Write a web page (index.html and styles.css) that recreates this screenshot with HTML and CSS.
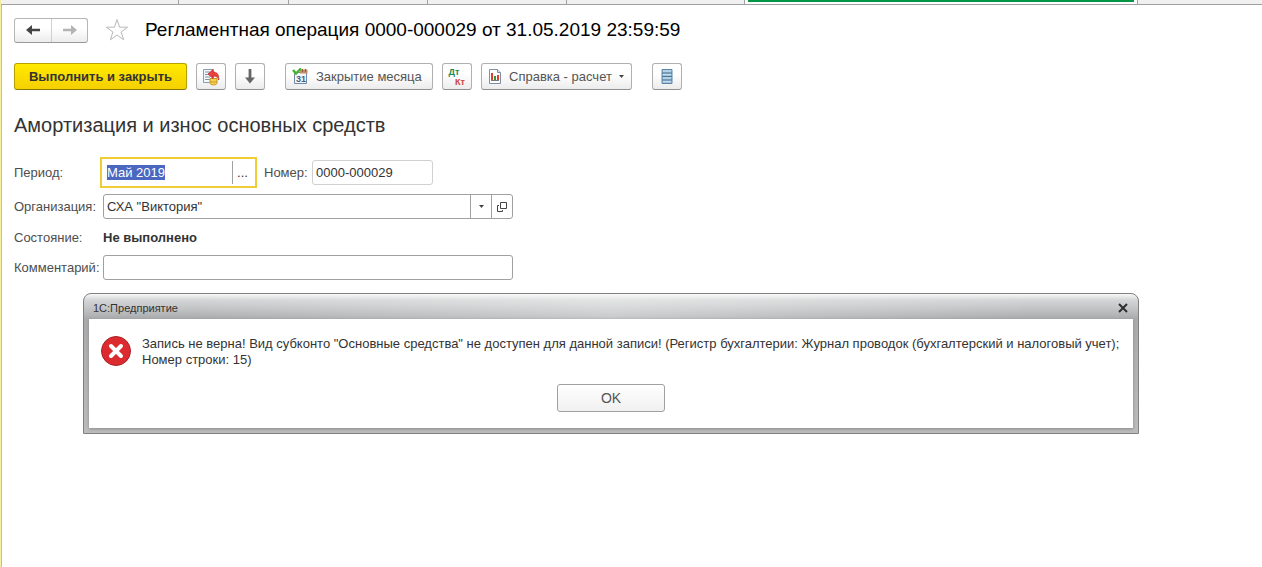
FILE: index.html
```html
<!DOCTYPE html>
<html lang="ru">
<head>
    <meta charset="UTF-8">
    <meta name="viewport" content="width=device-width, initial-scale=1.0">
    <title>Регламентная операция</title>
    <link rel="stylesheet" href="styles.css">
</head>
<body>
    <div class="window">
        <div class="tabs">
            <div class="tab tab-w1"></div>
            <div class="tab tab-w2"></div>
            <div class="tab tab-w3"></div>
            <div class="tab tab-w3"></div>
            <div class="tab tab-w1"></div>
            <div class="tab active"></div>
        </div>

        <main>
            <header class="title-row">
                <div class="nav">
                    <button type="button" aria-label="Назад">
                        <svg width="14" height="12" viewBox="0 0 14 12"><path d="M0 6l6-5v3.7h8v2.6H6V11z" fill="#444"/></svg>
                    </button>
                    <button type="button" aria-label="Вперед">
                        <svg width="14" height="12" viewBox="0 0 14 12"><path d="M14 6L8 1v3.7H0v2.6h8V11z" fill="#b4b4b4"/></svg>
                    </button>
                </div>
                <button type="button" class="star" aria-label="В избранное">
                    <svg width="24" height="24" viewBox="0 0 24 24"><path d="M12 1.5l2.6 7.7h8l-6.5 4.8 2.5 7.8-6.600-4.800-6.600 4.800 2.500-7.800L1.400 9.200h8z" fill="#fff" stroke="#b8b8b8"/></svg>
                </button>
                <h1>Регламентная операция 0000-000029 от 31.05.2019 23:59:59</h1>
            </header>

            <div class="toolbar">
                <button type="button" class="btn primary">Выполнить и закрыть</button>
                <button type="button" class="btn icon" aria-label="Провести">
                    <svg width="18" height="18" viewBox="0 0 18 18">
                        <path d="M1.500 1.500h10v13h-10z" fill="#f5f8fb" stroke="#8a9cb0"/>
                        <path d="M3 4h5M3 6.500h5M3 9h5M3 11.500h6" stroke="#7f93aa"/>
                        <path d="M8 10.500v4.500c0 2.500 7 2.500 7 0v-4.500z" fill="#f5cf4f" stroke="#c99a22"/>
                        <path d="M8 13c1 1.500 6 1.500 7 0" fill="none" stroke="#c99a22"/>
                        <path d="M6 6l5-4.500V4c4 0 6 2 5.800 8-1-3-2.500-4-5.800-4v2.500z" fill="#e8433f" stroke="#c52d30" stroke-width=".7"/>
                    </svg>
                </button>
                <button type="button" class="btn icon" aria-label="Записать">
                    <svg width="10" height="15" viewBox="0 0 10 15"><path d="M3.600 0h2.800v8.500H10L5 14.500 0 8.500h3.600z" fill="#666"/></svg>
                </button>
                <button type="button" class="btn wide month">
                    <svg width="17" height="17" viewBox="0 0 17 17">
                        <path d="M2.500 4.500h12v11h-12z" fill="#f2f6fb" stroke="#7188a6"/>
                        <path d="M8 1.500h7.500v4H8z" fill="#c58f6b"/>
                        <path d="M10.500 1v3M13.500 1v3" stroke="#8d5e42"/>
                        <text x="4" y="14" class="day">31</text>
                        <path d="M1 2l3 3.500L9 .5" fill="none" stroke="#45b32b" stroke-width="2.400"/>
                    </svg>
                    Закрытие месяца
                </button>
                <button type="button" class="btn icon dtkt" aria-label="Проводки">
                    <span class="dt">Дт</span>
                    <span class="kt">Кт</span>
                </button>
                <button type="button" class="btn wide report">
                    <svg width="14" height="15" viewBox="0 0 14 15">
                        <path d="M1.500.500h8l3 3v11h-11z" fill="#fff" stroke="#7e8fa5"/>
                        <path d="M9.500.500v3h3" fill="#dce5ef" stroke="#7e8fa5"/>
                        <path d="M3 4h2v7H3z" fill="#e23b32"/>
                        <path d="M6 7h2v4H6z" fill="#35953f"/>
                        <path d="M9 6h2v5H9z" fill="#e23b32"/>
                        <path d="M3 11.500h8" stroke="#777"/>
                    </svg>
                    Справка - расчет
                    <svg width="5" height="3" viewBox="0 0 5 3"><path d="M0 0h5L2.500 3z" fill="#444"/></svg>
                </button>
                <button type="button" class="btn icon list" aria-label="Реестр">
                    <svg width="12" height="15" viewBox="0 0 12 15">
                        <path d="M1 .5h10v14H1z" fill="#9fc3df" stroke="#5f86a8"/>
                        <path d="M1 4h10M1 7.500h10M1 11h10" stroke="#4f7595"/>
                        <path d="M2 2h8M2 5.500h8M2 9h8M2 12.500h8" stroke="#c5dff0"/>
                    </svg>
                </button>
            </div>

            <h2>Амортизация и износ основных средств</h2>

            <form class="form">
                <div class="row">
                    <label for="period">Период:</label>
                    <div class="period">
                        <input type="text" id="period" value="Май 2019">
                        <button type="button" aria-label="Выбрать период">...</button>
                    </div>
                    <label for="number" class="number-label">Номер:</label>
                    <input type="text" id="number" class="field number" value="0000-000029">
                </div>
                <div class="row">
                    <label for="org">Организация:</label>
                    <div class="field combo">
                        <div class="select">
                            <select id="org">
                                <option>СХА "Виктория"</option>
                            </select>
                            <span class="caret"><svg width="5" height="3" viewBox="0 0 5 3"><path d="M0 0h5L2.500 3z" fill="#444"/></svg></span>
                        </div>
                        <button type="button" aria-label="Открыть">
                            <svg width="10" height="10" viewBox="0 0 10 10"><path d="M3.500.500h6v6h-6zM2 3.500H.5v6h5V8" fill="none" stroke="#444"/></svg>
                        </button>
                    </div>
                </div>
                <div class="row state-row">
                    <span class="label">Состояние:</span>
                    <strong>Не выполнено</strong>
                </div>
                <div class="row">
                    <label for="comment">Комментарий:</label>
                    <input type="text" id="comment" class="field">
                </div>
            </form>

            <section class="dialog" role="alertdialog" aria-labelledby="dialog-title">
                <div class="dialog-head">
                    <span id="dialog-title">1С:Предприятие</span>
                    <button type="button" aria-label="Закрыть">
                        <svg width="10" height="10" viewBox="0 0 10 10"><path d="M1 1l8 8M9 1L1 9" stroke="#2e2e2e" stroke-width="2"/></svg>
                    </button>
                </div>
                <div class="dialog-body">
                    <div class="message">
                        <svg width="30" height="30" viewBox="0 0 30 30">
                            <circle cx="15" cy="15" r="14.500" fill="#dc2b30" stroke="#a82226"/>
                            <path d="M10 10l10 10M20 10L10 20" stroke="#fff" stroke-width="4" stroke-linecap="round"/>
                        </svg>
                        <p>Запись не верна! Вид субконто "Основные средства" не доступен для данной записи! (Регистр бухгалтерии: Журнал проводок (бухгалтерский и налоговый учет); Номер строки: 15)</p>
                    </div>
                    <button type="button" class="ok">OK</button>
                </div>
            </section>
        </main>
    </div>
    <script src="index.js"></script>
</body>
</html>
```
FILE: styles.css
```css
* {
    margin: 0;
    padding: 0;
    box-sizing: border-box;
}

body {
    font-family: "Liberation Sans", Arial, sans-serif;
    font-size: 13px;
    color: #333;
    background: #fff;
}

button,
input,
select {
    font: inherit;
    color: inherit;
    border: none;
    background: none;
    outline: none;
}

svg {
    display: block;
    flex-shrink: 0;
}

.window {
    min-height: 100vh;
    border-left: 1px solid #f7efa0;
    box-shadow: inset 1px 0 #cfc568;
}

/* open windows strip */
.tabs {
    display: flex;
    height: 5px;
    background: #f0f0f0;
    border-bottom: 1px solid #a0a0a0;
}

.tab {
    border-right: 1px solid #a0a0a0;
}

.tab-w1 {
    width: 178px;
}

.tab-w2 {
    width: 110px;
}

.tab-w3 {
    width: 139px;
}

.tab.active {
    width: 393px;
    padding: 0 3px;
    background: #fff;
}

.tab.active::before {
    content: '';
    display: block;
    height: 2px;
    background: #009646;
}

main {
    padding: 12px 123px 0 13px;
}

.title-row {
    display: flex;
    align-items: center;
    height: 26px;
}

.nav {
    display: flex;
    height: 25px;
    border: 1px solid #b5b5b5;
    border-bottom-color: #999;
    border-radius: 3px;
    background: linear-gradient(#fff 40%, #ececec);
}

.nav button {
    display: flex;
    align-items: center;
    justify-content: center;
    width: 36px;
}

.nav button + button {
    border-left: 1px solid #d0d0d0;
}

.star {
    margin: 0 16px 0 17px;
}

h1 {
    font-size: 19px;
    font-weight: 400;
    color: #000;
}

.toolbar {
    display: flex;
    height: 27px;
    margin-top: 20px;
}

.btn {
    display: flex;
    align-items: center;
    justify-content: center;
    margin-right: 9px;
    border: 1px solid #b0b0b0;
    border-bottom-color: #909090;
    border-radius: 3px;
    background: linear-gradient(#fff 40%, #ececec);
    color: #555;
    white-space: nowrap;
}

.primary {
    width: 173px;
    border-color: #b5a000;
    border-bottom-color: #8a7a00;
    background: linear-gradient(#ffea00, #f5d000);
    color: #333;
    font-weight: 700;
}

.icon {
    width: 30px;
}

.wide {
    justify-content: flex-start;
    gap: 7px;
    padding-left: 6px;
}

.month {
    width: 148px;
    margin-left: 11px;
}

.day {
    font-size: 9px;
    font-weight: 700;
    fill: #4a607c;
}

.dtkt {
    flex-direction: column;
    font-size: 9px;
    font-weight: 700;
    line-height: 10px;
}

.dt {
    padding-right: 6px;
    color: #168a50;
}

.kt {
    padding-left: 6px;
    color: #cc4444;
}

.report {
    width: 151px;
}

.list {
    margin-left: 11px;
}

h2 {
    margin-top: 23px;
    font-size: 20px;
    font-weight: 400;
    line-height: 24px;
}

.form {
    display: grid;
    gap: 6px;
    margin-top: 20px;
}

.row {
    display: flex;
    align-items: center;
}

.row label,
.row .label {
    width: 89px;
    color: #4d4d4d;
}

.row .number-label {
    width: 48px;
    margin-left: 7px;
}

.period {
    display: flex;
    width: 157px;
    height: 31px;
    margin-left: -3px;
    padding: 2px 0;
    border: 2px solid #f0cc35;
}

.period input {
    flex: 1;
    min-width: 0;
    padding-left: 5px;
}

.period input::selection {
    background: #4b67c0;
    color: #fff;
}

.period button {
    width: 23px;
    border-left: 1px solid #a0a0a0;
    padding-right: 3px;
}

.field {
    width: 410px;
    height: 25px;
    padding: 0 3px;
    border: 1px solid #a0a0a0;
    border-radius: 3px;
}

.number {
    width: 121px;
    border-color: #d0d0d0;
}

.combo {
    display: flex;
    padding: 0;
}

.select {
    position: relative;
    flex: 1;
}

.select select {
    width: 100%;
    height: 100%;
    padding-left: 3px;
    appearance: none;
}

.caret {
    position: absolute;
    top: 0;
    right: 0;
    display: flex;
    align-items: center;
    justify-content: center;
    width: 21px;
    height: 100%;
    border-left: 1px solid #a0a0a0;
    pointer-events: none;
}

.combo button {
    display: flex;
    align-items: center;
    justify-content: center;
    width: 21px;
    border-left: 1px solid #a0a0a0;
}

.state-row {
    height: 24px;
}

.dialog {
    margin: 13px 0 0 69px;
    padding: 0 5px 5px;
    border: 1px solid #808080;
    border-radius: 8px 8px 0 0;
    /* soft highlight in the middle of the caption */
    background:
        linear-gradient(90deg, transparent 10%, rgba(255, 255, 255, 0.35) 50%, transparent 90%) top / 100% 25px no-repeat,
        linear-gradient(#f8f8f8, #d4d5d6 6px, #c4c5c7 14px, #a9aaac 25px, #bcbcbc);
}

.dialog-head {
    display: flex;
    align-items: center;
    justify-content: space-between;
    height: 25px;
    padding: 3px 5px 0 4px;
    font-size: 11px;
}

.dialog-body {
    padding: 17px 0 16px;
    background: #fff;
    box-shadow: 0 1px 3px #888;
}

.message {
    display: flex;
    gap: 11px;
    padding: 0 4px 0 12px;
    line-height: 16px;
}

.ok {
    display: block;
    width: 108px;
    height: 28px;
    margin: 16px auto 0;
    border: 1px solid #a0a0a0;
    border-radius: 3px;
    background: linear-gradient(#fff, #f0f0f0);
    color: #555;
    font-size: 14px;
}
```
FILE: index.js
```js
const period = document.getElementById('period');
period.focus();
period.select();
```
